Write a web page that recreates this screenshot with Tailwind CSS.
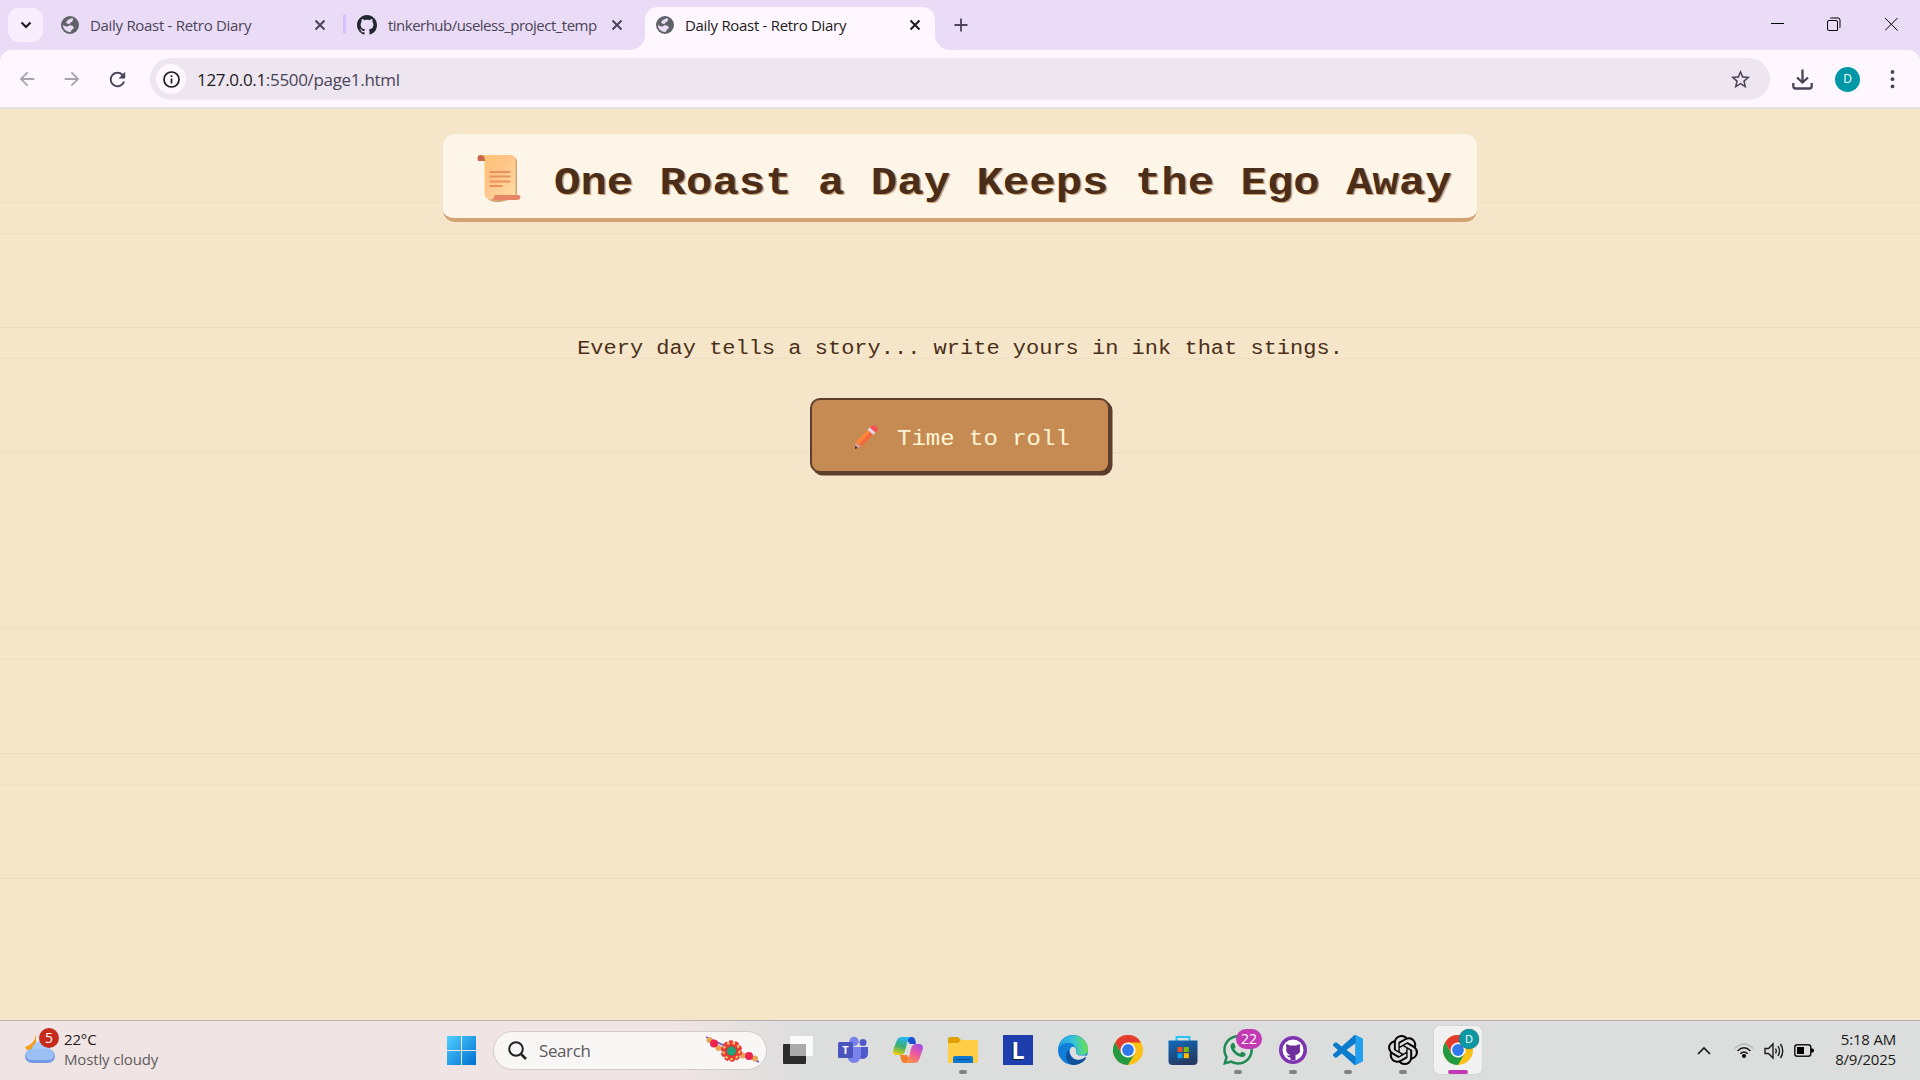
<!DOCTYPE html>
<html lang="en">
<head>
<meta charset="utf-8">
<title>Daily Roast - Retro Diary</title>
<script src="https://cdn.jsdelivr.net/npm/@tailwindcss/browser@4"></script>
</head>
<body class="w-[1920px] h-[1080px] overflow-hidden">
<svg class="hidden">
  <symbol id="globe" viewBox="0 0 18 18"><circle cx="9" cy="9" r="9" fill="#5f6368"/><path d="M11.500 2Q5.500 3.500 5 7L8.500 8.300Q8.500 6.300 11 5.800Q13 4 11.500 2ZM1.800 8.800Q4 11 7 10.300Q8 9 10.500 9.500Q13.500 10.500 12.500 12.500Q10.500 13 9.500 16.200Q2.500 16 1.800 8.800Z" fill="#eadcf5"/></symbol>
  <symbol id="x" viewBox="0 0 12 12"><path d="M1.500 1.500L10.500 10.500M10.500 1.500L1.500 10.500" stroke="currentColor" stroke-width="2" fill="none"/></symbol>
  <symbol id="gh" viewBox="0 0 16 16"><path fill="currentColor" d="M8 0C3.580 0 0 3.580 0 8c0 3.540 2.290 6.530 5.470 7.590.4.070.55-.17.55-.38 0-.19-.01-.82-.01-1.490-2.010.37-2.530-.49-2.690-.94-.09-.23-.48-.94-.82-1.130-.28-.15-.68-.52-.01-.53.63-.01 1.080.58 1.230.82.72 1.210 1.870.87 2.330.66.070-.52.28-.87.51-1.070-1.780-.2-3.640-.89-3.640-3.950 0-.87.31-1.590.82-2.150-.08-.2-.36-1.020.08-2.120 0 0 .67-.21 2.200.82.64-.18 1.320-.27 2-.27.68 0 1.360.09 2 .27 1.530-1.040 2.200-.82 2.200-.82.44 1.100.16 1.920.08 2.120.51.56.82 1.270.82 2.150 0 3.070-1.870 3.750-3.650 3.950.29.25.54.73.54 1.480 0 1.070-.01 1.930-.01 2.200 0 .21.15.46.55.38A8.013 8.013 0 0016 8c0-4.420-3.580-8-8-8z"/></symbol>
  <symbol id="chrome" viewBox="0 0 30 30"><circle cx="15" cy="15" r="15" fill="#fbc116"/><path d="M2 7.500A15 15 0 0 1 28 7.500L15 7.500L8.500 18.700Z" fill="#e33b2e"/><path d="M2 7.500L8.500 18.750L15 22.500L21.500 18.700L15 30A15 15 0 0 1 2 7.500Z" fill="#249a42"/><circle cx="15" cy="15" r="7.500" fill="#fff"/><circle cx="15" cy="15" r="5.900" fill="#3079ed"/></symbol>
</svg>
<div class="flex h-full flex-col bg-[#f5e6c9]">
  <!-- tab strip -->
  <div class="flex h-[50px] shrink-0 items-start bg-[#eadcf6] font-['Open_Sans',sans-serif] text-[#4a4458]">
    <div class="mt-2 ml-2 flex h-[34px] w-[35px] items-center justify-center rounded-[11px] bg-[#f8eefe]"><svg class="h-[8px] w-[12px]" viewBox="0 0 12 8"><path d="M1.500 1.500L6 6L10.500 1.500" fill="none" stroke="#1d1b20" stroke-width="2.200"/></svg></div>
    <div class="ml-[18px] flex h-[50px] w-[282px] items-center"><svg class="size-[18px]"><use href="#globe"/></svg><span class="ml-[11px] w-[224px] pt-px text-[15px] tracking-[-0.3px] whitespace-nowrap">Daily Roast - Retro Diary</span><svg class="size-3"><use href="#x"/></svg></div>
    <div class="mt-[14px] h-[20px] w-[3px] rounded bg-[#dcbfff]"></div>
    <div class="ml-[11px] flex h-[50px] w-[288px] items-center text-[#24292f]"><svg class="size-5"><use href="#gh"/></svg><span class="ml-[11px] w-[223px] pt-px text-[15px] tracking-[-0.52px] whitespace-nowrap text-[#4a4458]">tinkerhub/useless_project_temp</span><svg class="size-3 text-[#4a4458]"><use href="#x"/></svg></div>
    <div class="relative mt-[7px] flex h-[43px] w-[290px] items-center rounded-t-[13px] bg-[#fef7ff] pb-[7px] pl-[11px] text-[#1d1b20]">
      <svg class="absolute bottom-0 left-[-15px] size-[15px]" viewBox="0 0 15 15"><path d="M0 15A15 15 0 0 0 15 0V15Z" fill="#fef7ff"/></svg>
      <svg class="absolute right-[-15px] bottom-0 size-[15px]" viewBox="0 0 15 15"><path d="M15 15A15 15 0 0 1 0 0V15Z" fill="#fef7ff"/></svg>
      <svg class="size-[18px]"><use href="#globe"/></svg><span class="ml-[11px] w-[224px] pt-px text-[15px] tracking-[-0.3px] whitespace-nowrap">Daily Roast - Retro Diary</span><svg class="size-3"><use href="#x"/></svg>
    </div>
    <svg class="mt-[18px] ml-[19px] size-[14px]" viewBox="0 0 14 14"><path d="M7 .5V13.500M.5 7H13.500" stroke="#4a4458" stroke-width="1.800"/></svg>
    <div class="mt-[17px] mr-[21px] ml-auto flex text-black">
      <svg class="size-[14px]" viewBox="0 0 14 14"><path d="M0 6.500H13" stroke="currentColor"/></svg>
      <svg class="ml-[42px] size-[14px]" viewBox="0 0 14 14"><path d="M2 3.500H9Q10.500 3.500 10.500 5V13.500H2Q.5 13.500 .5 12V5Q.5 3.500 2 3.500Z" fill="none" stroke="currentColor"/><path d="M3 1.500Q3.300 1 4.500 1H11Q13 1 13 3V9.500Q13 11 12.300 11.200" fill="none" stroke="currentColor"/></svg>
      <svg class="ml-[44px] size-[14px]" viewBox="0 0 14 14"><path d="M0 1L12.500 13.500M12.500 1L0 13.500" stroke="currentColor"/></svg>
    </div>
  </div>
  <!-- toolbar -->
  <div class="h-[59px] shrink-0 bg-[#eadcf6]">
    <div class="flex h-[59px] items-center rounded-t-[12px] border-b-2 border-[#e7dfea] bg-[#fef7ff] pt-px pr-5 pl-4">
      <svg class="size-[22px] text-[#aaa3ae]" viewBox="0 0 24 24"><path fill="currentColor" d="M20 11H7.830l5.590-5.590L12 4l-8 8 8 8 1.410-1.410L7.830 13H20v-2z"/></svg>
      <svg class="ml-[23px] size-[22px] rotate-180 text-[#aaa3ae]" viewBox="0 0 24 24"><path fill="currentColor" d="M20 11H7.830l5.590-5.590L12 4l-8 8 8 8 1.410-1.410L7.830 13H20v-2z"/></svg>
      <svg class="ml-[23px] size-[23px] text-[#4a4458]" viewBox="0 0 24 24"><path fill="currentColor" d="M17.650 6.350C16.200 4.900 14.210 4 12 4c-4.420 0-7.990 3.580-7.990 8s3.570 8 7.990 8c3.730 0 6.840-2.550 7.730-6h-2.080c-.82 2.330-3.040 4-5.650 4-3.310 0-6-2.690-6-6s2.690-6 6-6c1.660 0 3.140.69 4.220 1.780L13 11h7V4l-2.350 2.350z"/></svg>
      <div class="ml-[21px] flex h-[42px] w-[1620px] items-center rounded-full bg-[#ede6f1] pr-[18px] pl-[6px]">
        <div class="flex size-[30px] items-center justify-center rounded-full bg-[#fef7ff]"><svg class="size-[17px]" viewBox="0 0 17 17"><circle cx="8.500" cy="8.500" r="7.500" fill="none" stroke="#1d1b20" stroke-width="1.700"/><path d="M8.500 7.500V12.500M8.500 4.300V6" stroke="#1d1b20" stroke-width="1.700"/></svg></div>
        <span class="ml-[11px] pt-px font-['Open_Sans',sans-serif] text-[17px] tracking-[-0.32px] whitespace-nowrap text-[#4a4458]"><span class="text-[#1d1b20]">127.0.0.1</span>:5500/page1.html</span>
        <svg class="ml-auto size-[23px] text-[#4a4458]" viewBox="0 0 24 24"><path fill="currentColor" d="M22 9.240l-7.190-.62L12 2 9.190 8.630 2 9.240l5.460 4.730L5.820 21 12 17.270 18.180 21l-1.630-7.030L22 9.240zM12 15.400l-3.760 2.270 1-4.280-3.320-2.880 4.380-.38L12 6.100l1.710 4.040 4.380.38-3.320 2.880 1 4.280L12 15.400z"/></svg>
      </div>
      <svg class="ml-[22px] size-[21px]" viewBox="0 0 21 21"><path d="M10.500 .5V13M5 8.500L10.500 13.500L16 8.500M1.300 14V17Q1.300 19.500 3.500 19.500H17.500Q19.700 19.500 19.700 17V14" fill="none" stroke="#4a4458" stroke-width="2.300"/></svg>
      <div class="ml-[22px] flex size-[25px] items-center justify-center rounded-full bg-[#0097a7] font-['Open_Sans',sans-serif] text-xs text-white">D</div>
      <svg class="ml-auto h-[19px] w-[15px]" viewBox="0 0 15 19"><g fill="#4a4458"><circle cx="7.500" cy="2" r="1.900"/><circle cx="7.500" cy="9.200" r="1.900"/><circle cx="7.500" cy="16.400" r="1.900"/></g></svg>
    </div>
  </div>
  <!-- diary page -->
  <main class="relative isolate flex h-[911px] flex-col items-center font-['Liberation_Mono','Courier_New',monospace] text-[#4b2e1a]">
    <!-- ruled paper lines -->
    <div class="absolute inset-0 -z-10 flex flex-col pt-[93px] *:grid *:h-[125px] *:shrink-0 *:grid-rows-4">
      <div><i class="border-t border-[#efddc0]"></i><i class="border-t border-[#f0dfc2]"></i><i class="border-t border-[#f3e3c7]"></i><i></i></div>
      <div><i class="border-t border-[#efddc0]"></i><i class="border-t border-[#f0dfc2]"></i><i class="border-t border-[#f3e3c7]"></i><i></i></div>
      <div><i class="border-t border-[#f1dabd]"></i><i class="border-t border-[#f1e0c3]"></i><i class="border-t border-[#f4e4c8]"></i><i></i></div>
      <div class="mt-[51px]"><i class="border-t border-[#efddc0]"></i><i class="border-t border-[#f0dfc2]"></i><i></i><i></i></div>
      <div><i class="border-t border-[#efddc0]"></i><i class="border-t border-[#f0dfc2]"></i><i></i><i></i></div>
      <div><i class="border-t border-[#efddc0]"></i><i class="border-t border-[#f3e3c7]"></i><i></i><i></i></div>
    </div>
    <h1 class="mt-[25px] flex h-[88px] w-[1034px] items-center rounded-[12px] border-b-4 border-[#d4a373] bg-[#fffaf0]/80 pl-[31px] text-[44px] font-bold whitespace-nowrap">
      <svg class="mt-[4px] h-[48px] w-[49px] shrink-0" viewBox="0 0 48 48"><defs><linearGradient id="sc" x2="1" y2="1"><stop stop-color="#ffc96d"/><stop offset=".4" stop-color="#ffc286"/><stop offset="1" stop-color="#ffdfa5"/></linearGradient></defs><path d="M5 2H36Q41 2 41 7V43L24 47Q11 48 11 40V8Z" fill="#d4a373" transform="translate(1.500 1)"/><path d="M5 1H37Q41 2 41 6V42L23 46Q10 47 10 40V6Z" fill="url(#sc)"/><path d="M3 4Q3 1 6.500 1Q10.500 1 10.500 7H4Q3 7 3 4Z" fill="#cc6548"/><path d="M20 41H44Q46 41 46 43Q46 46 42 46H15Q20 46 20 41Z" fill="#e78766"/><path d="M15 18H36M15 22.500H36M15 27.500H36M15 32H28" stroke="#e8935e" stroke-width="2"/></svg>
      <span class="ml-[31px] inline-block scale-y-[.88] pt-[15px] [text-shadow:1.500px_1.500px_#d4a373]">One Roast a Day Keeps the Ego Away</span>
    </h1>
    <p class="mt-[115px] scale-y-[.9] text-[22px] leading-[25px] whitespace-nowrap">Every day tells a story... write yours in ink that stings.</p>
    <button class="mt-[36px] flex h-[75px] w-[300px] items-center rounded-[10px] border-2 border-[#5d3d2b] bg-[#c68b52] pl-[41px] text-[24px] whitespace-nowrap text-[#fff5d6] shadow-[2.500px_2.500px_#5d3d2b]">
      <svg class="mt-[3px] h-[27px] w-[27px]" viewBox="0 0 28 28"><path d="M2 26L2.500 19L18 3L24 8L9 23Z" fill="#fb8638"/><path d="M5.500 22L20.500 5.500L24 8L9 23Z" fill="#ee6a3c"/><path d="M2 26L2.500 19L9 23Z" fill="#d99a8d"/><path d="M2 26L2.300 22.500L5 24.800Z" fill="#4a2540"/><path d="M15 6L17.500 3.500L23.500 8.700L21.200 11.300Z" fill="#dcd6e8"/><path d="M17.500 3.500Q20 1 22.500 1.800Q26.500 3.500 25.500 6.500L23.500 8.700Z" fill="#fb4d55"/></svg>
      <span class="ml-[17px] inline-block scale-y-[.92] pt-[8px]">Time to roll</span>
    </button>
  </main>
  <!-- taskbar -->
  <div class="flex h-[60px] shrink-0 items-center border-t border-[#b7b1b1] bg-linear-to-r from-[#f0e5e4] from-35% to-[#dcdddd] to-42% font-['Open_Sans',sans-serif] text-sm">
    <div class="relative ml-[24px] h-[38px] w-[40px] shrink-0"><svg class="size-full" viewBox="0 0 40 38"><path d="M12 2V18H3L1 15Q11 12 12 2Z" fill="#f3a11b"/><rect x="1" y="17" width="30" height="14" rx="7" fill="#7299e6"/><circle cx="17" cy="18" r="9" fill="#a8caf8"/><rect x="2" y="17" width="28" height="11" rx="5.500" fill="#9cc0f6"/></svg><div class="absolute top-[-4px] left-[15px] flex size-5 items-center justify-center rounded-full bg-[#c42b1c] text-sm text-white">5</div></div>
    <div class="w-[383px] pb-[3px] text-[15px] leading-5 tracking-[-0.15px] text-[#1b1b1b]"><div>22°C</div><div class="text-[#605c5c]">Mostly cloudy</div></div>
    <svg class="h-[29px] w-[29px] shrink-0" viewBox="0 0 29 29"><defs><linearGradient id="win" x2="1" y2="1"><stop stop-color="#4fd0ff"/><stop offset="1" stop-color="#006fd1"/></linearGradient></defs><path d="M0 0H14V14H0ZM15 0H29V14H15ZM0 15H14V29H0ZM15 15H29V29H15Z" fill="url(#win)"/></svg>
    <div class="ml-[17px] flex h-[39px] w-[274px] shrink-0 items-center rounded-full border border-[#d3cbcb] bg-[#f9f6f6] pl-[14px]">
      <svg class="size-[19px]" viewBox="0 0 19 19"><circle cx="8" cy="8" r="6.800" fill="none" stroke="#222" stroke-width="2"/><path d="M13 13L18 18" stroke="#222" stroke-width="2.500"/></svg>
      <span class="ml-[12px] w-[166px] pt-px text-[17px] tracking-[-0.4px] text-[#5d5a5a]">Search</span>
      <svg class="mb-[2px] h-[28px] w-[56px]" viewBox="0 0 56 28"><path d="M1 1L54 26" stroke="#6b4fc0" stroke-width="1.500"/><g fill="#e5a555"><circle cx="4.500" cy="4" r="3"/><circle cx="13.500" cy="12" r="3"/><circle cx="38" cy="19.500" r="3"/><circle cx="50" cy="22.500" r="3"/></g><circle cx="9" cy="7.500" r="4" fill="#ee2350"/><circle cx="44" cy="20" r="4" fill="#ee2350"/><circle cx="26.500" cy="15" r="9.500" fill="#e93a3a" stroke="#e93a3a" stroke-width="2.500" stroke-dasharray="4 2"/><circle cx="26.500" cy="15" r="8" fill="none" stroke="#ffd257" stroke-width="2" stroke-dasharray="2.500 3"/><circle cx="26.500" cy="15" r="5" fill="#1fa77a" stroke="#c43a2e"/></svg>
    </div>
    <div class="ml-[7px] flex shrink-0 gap-[7px] pb-px *:relative *:flex *:size-12 *:items-center *:justify-center">
      <div><svg class="size-[30px]" viewBox="0 0 30 30"><rect y="9" width="23" height="20" rx="1" fill="#2c2c2c"/><rect x="7" y="1" width="23" height="20" rx="1" fill="#fafafa"/><rect x="7" y="9" width="16" height="12" fill="#aaa"/></svg></div>
      <div><svg class="size-[30px]" viewBox="0 0 30 30"><circle cx="25" cy="7.500" r="3.500" fill="#5059c9"/><path d="M20 12H30V19Q29.500 24 24 24L20 23Z" fill="#5059c9"/><circle cx="16" cy="6.500" r="4.700" fill="#7b83eb"/><path d="M9 12H23V20Q22 28 16 28Q10 28 9 20Z" fill="#7b83eb"/><rect y="7" width="15" height="16" rx="1.500" fill="#4b53bc"/><text x="7.500" y="19" text-anchor="middle" font-size="11" font-weight="bold" fill="#fff">T</text></svg></div>
      <div><svg class="size-[30px]" viewBox="0 0 30 30"><defs><linearGradient id="ca" x1=".5" x2=".2" y2="1"><stop stop-color="#22b7f2"/><stop offset=".5" stop-color="#3aaf6f"/><stop offset="1" stop-color="#f7d000"/></linearGradient><linearGradient id="cb" x1=".8" x2=".2" y2="1"><stop stop-color="#a44ee8"/><stop offset=".5" stop-color="#ee5a9c"/><stop offset="1" stop-color="#ff9a3c"/></linearGradient></defs><path d="M11 2H19Q21.500 2 22.500 6L23 9H17Z" fill="#1b4fd0"/><path d="M19 28H11Q9 28 8 24L7 20H14Z" fill="#f2802e"/><path d="M9 2H18Q15 3 14 8L12 16Q11 20 7 20H3Q-1 20 .5 14L4 5Q5.500 2 9 2Z" fill="url(#ca)"/><path d="M21 28H12Q15 27 16 22L18 14Q19 9 23 9H27Q31 10 29.500 15L26 25Q24.500 28 21 28Z" fill="url(#cb)"/></svg></div>
      <div><svg class="size-[30px]" viewBox="0 0 30 30"><path d="M0 4Q0 2 2 2H10L13 5H28Q30 5 30 7V12H0Z" fill="#e0a008"/><path d="M0 8H10L13 5H30V28H0Z" fill="#ffce47"/><path d="M5 28V23Q5 21 7 21H23Q25 21 25 23V28Z" fill="#0f78d0"/><path d="M8 24.500H22" stroke="#0b4f94"/></svg><i class="absolute bottom-0 h-1 w-2 rounded bg-[#828282]"></i></div>
      <div><div class="flex size-[30px] items-center justify-center bg-[#1f3ead] text-[23px] font-bold text-white [text-shadow:-1px_1px_#123]">L</div></div>
      <div><svg class="size-[30px]" viewBox="0 0 30 30"><defs><linearGradient id="ea" y1=".5" y2=".4"><stop stop-color="#1f9ede"/><stop offset=".5" stop-color="#35c1e0"/><stop offset="1" stop-color="#6be645"/></linearGradient></defs><circle cx="15" cy="15" r="15" fill="#0f7fd8"/><path d="M1 10A15 15 0 0 1 30 14Q30 20 24 20Q18 20 18 18Q19.500 16 18 13Q15 7 8 8Q3 9 0 14Z" fill="url(#ea)"/><path d="M11.500 17Q12 11 16.500 12Q19 14 18 18Q19 21 25 20.500Q31 20 31 22L27 26Q14 27 11.500 17Z" fill="#dcdedf"/><path d="M11 15Q11 24 20 25Q24 25 27.500 22Q28.500 22 27 25Q22 30 15 30Q8 28 8 21Q8 17 11 15Z" fill="#0f509b"/></svg></div>
      <div><svg class="size-[30px]"><use href="#chrome"/></svg></div>
      <div><svg class="size-[30px]" viewBox="0 0 30 30"><defs><linearGradient id="st" y2="1" x2=".4"><stop stop-color="#0f6cbd"/><stop offset="1" stop-color="#243a63"/></linearGradient></defs><path d="M8.500 6V2H21.500V6" fill="none" stroke="#29c3f5" stroke-width="2"/><path d="M.5 5.500H29.500V26Q29.500 30 25.500 30H4.500Q.5 30 .5 26Z" fill="url(#st)"/><path d="M9.500 12H14.500V17H9.500Z" fill="#f25022"/><path d="M15.800 12H20.800V17H15.800Z" fill="#7fba00"/><path d="M9.500 18.200H14.500V23.200H9.500Z" fill="#00a4ef"/><path d="M15.800 18.200H20.800V23.200H15.800Z" fill="#ffb900"/></svg></div>
      <div><svg class="size-[30px] text-[#1f8b52]" viewBox="0 0 24 24"><path fill="currentColor" d="M17.472 14.382c-.297-.149-1.758-.867-2.030-.967-.273-.099-.471-.148-.67.15-.197.297-.767.966-.94 1.164-.173.199-.347.223-.644.075-.297-.15-1.255-.463-2.390-1.475-.883-.788-1.480-1.761-1.653-2.059-.173-.297-.018-.458.13-.606.134-.133.298-.347.446-.52.149-.174.198-.298.298-.497.099-.198.05-.371-.025-.52-.075-.149-.669-1.612-.916-2.207-.242-.579-.487-.5-.669-.51-.173-.008-.371-.01-.57-.01-.198 0-.52.074-.792.372-.272.297-1.040 1.016-1.040 2.479 0 1.462 1.065 2.875 1.213 3.074.149.198 2.096 3.200 5.077 4.487.709.306 1.262.489 1.694.625.712.227 1.360.195 1.871.118.571-.085 1.758-.719 2.006-1.413.248-.694.248-1.289.173-1.413-.074-.124-.272-.198-.57-.347m-5.421 7.403h-.004a9.870 9.870 0 01-5.031-1.378l-.361-.214-3.741.982.998-3.648-.235-.374a9.860 9.860 0 01-1.510-5.260c.001-5.450 4.436-9.884 9.888-9.884 2.640 0 5.122 1.030 6.988 2.898a9.825 9.825 0 012.893 6.994c-.003 5.450-4.437 9.884-9.885 9.884m8.413-18.297A11.815 11.815 0 0012.050 0C5.495 0 .16 5.335.157 11.892c0 2.096.547 4.142 1.588 5.945L.057 24l6.305-1.654a11.882 11.882 0 005.683 1.448h.005c6.554 0 11.890-5.335 11.893-11.893a11.821 11.821 0 00-3.480-8.413Z"/></svg><b class="absolute top-[3px] left-[22px] flex h-5 w-[26px] items-center justify-center rounded-full bg-[#c239b3] text-sm font-normal text-white">22</b><i class="absolute bottom-0 h-1 w-2 rounded bg-[#828282]"></i></div>
      <div><svg class="size-[28px]" viewBox="0 0 28 28"><circle cx="14" cy="14" r="12.500" fill="#6e2f9c" stroke="#7f35b2" stroke-width="3"/><circle cx="14" cy="14" r="10.500" fill="#fff"/><path d="M7.500 8L11 9.500H17L20.500 8Q21.500 10 20.800 12Q22 16 19 18Q17.500 19 16.500 19V24H11.500V21.500Q9 22 7.500 19Q9 20 11.500 19Q8 18 7.200 15Q7 13 7.500 12Q6.500 10 7.500 8Z" fill="#6e2f9c"/></svg><i class="absolute bottom-0 h-1 w-2 rounded bg-[#828282]"></i></div>
      <div><svg class="size-[30px]" viewBox="0 0 24 24"><path fill="#0a7ccb" fill-rule="evenodd" d="M23.150 2.587L18.210.21a1.494 1.494 0 0 0-1.705.29l-9.460 8.630-4.120-3.128a.999.999 0 0 0-1.276.057L.327 7.261A1 1 0 0 0 .326 8.740L3.899 12 .326 15.260a1 1 0 0 0 .001 1.479L1.650 17.940a.999.999 0 0 0 1.276.057l4.120-3.128 9.460 8.630a1.492 1.492 0 0 0 1.704.29l4.942-2.377A1.500 1.500 0 0 0 24 20.060V3.939a1.500 1.500 0 0 0-.85-1.352zm-5.146 14.861L10.826 12l7.178-5.448v10.896z"/><path d="M18 .2L23.150 2.587Q24 3 24 4V20Q24 21 23.150 21.400L18 23.800Z" fill="#23a0f0"/></svg><i class="absolute bottom-0 h-1 w-2 rounded bg-[#828282]"></i></div>
      <div><svg class="size-[30px]" viewBox="0 0 24 24"><path d="M22.282 9.821a5.985 5.985 0 0 0-.516-4.911 6.046 6.046 0 0 0-6.510-2.900A6.065 6.065 0 0 0 4.981 4.182a5.985 5.985 0 0 0-3.998 2.900 6.046 6.046 0 0 0 .743 7.097 5.980 5.980 0 0 0 .511 4.911 6.051 6.051 0 0 0 6.515 2.900A5.985 5.985 0 0 0 13.260 24a6.056 6.056 0 0 0 5.772-4.206 5.989 5.989 0 0 0 3.998-2.900 6.056 6.056 0 0 0-.748-7.073zm-9.022 12.608a4.476 4.476 0 0 1-2.876-1.041l.142-.080 4.778-2.758a.795.795 0 0 0 .393-.681v-6.737l2.020 1.169a.071.071 0 0 1 .038.052v5.583a4.504 4.504 0 0 1-4.495 4.494zm-9.661-4.125a4.471 4.471 0 0 1-.535-3.014l.142.085 4.783 2.758a.771.771 0 0 0 .781 0l5.843-3.369v2.332a.080.080 0 0 1-.033.062L9.740 19.950a4.499 4.499 0 0 1-6.141-1.646zM2.341 7.896a4.485 4.485 0 0 1 2.366-1.973V11.600a.766.766 0 0 0 .388.677l5.814 3.354-2.020 1.169a.076.076 0 0 1-.071 0l-4.830-2.787A4.504 4.504 0 0 1 2.341 7.872zm16.596 3.856L13.104 8.364 15.119 7.200a.076.076 0 0 1 .071 0l4.830 2.791a4.494 4.494 0 0 1-.677 8.104v-5.677a.790.790 0 0 0-.407-.667zm2.011-3.023l-.142-.085-4.774-2.782a.776.776 0 0 0-.785 0L9.409 9.230V6.897a.066.066 0 0 1 .028-.062l4.830-2.787a4.499 4.499 0 0 1 6.680 4.660zM8.307 12.863l-2.020-1.164a.080.080 0 0 1-.038-.057V6.074a4.499 4.499 0 0 1 7.376-3.454l-.142.081L8.704 5.459a.795.795 0 0 0-.393.681zm1.098-2.365l2.602-1.500 2.607 1.500v2.999l-2.597 1.500-2.607-1.500Z"/></svg><i class="absolute bottom-0 h-1 w-2 rounded bg-[#828282]"></i></div>
      <div class="rounded-[5px] bg-[#f1f1f1] shadow-[0_0_1px_#999]"><svg class="size-[30px]"><use href="#chrome"/></svg><b class="absolute top-[3px] left-[25px] flex size-5 items-center justify-center rounded-full bg-[#0c97a2] text-[11px] font-normal text-white shadow-[0_0_1px_#333]">D</b><i class="absolute bottom-0 h-1 w-5 rounded bg-[#c239b3]"></i></div>
    </div>
    <div class="mr-[24px] ml-auto flex items-center text-[#1b1b1b]">
      <svg class="h-[9px] w-[14px]" viewBox="0 0 14 9"><path d="M1 8L7 2L13 8" fill="none" stroke="#1b1b1b" stroke-width="1.700"/></svg>
      <svg class="ml-[23px] h-[15px] w-[20px]" viewBox="0 0 20 15"><g fill="none" stroke="#1b1b1b" stroke-width="1.500"><path d="M.7 5.500Q10-3.500 19.300 5.500" stroke="#b7b7b7"/><path d="M3.500 8Q10 1.500 16.500 8M6.300 10.800Q10 7 13.700 10.800"/></g><circle cx="10" cy="13" r="2"/></svg>
      <svg class="ml-[10px] h-[18px] w-[20px]" viewBox="0 0 20 18"><g fill="none" stroke="#1b1b1b" stroke-width="1.400"><path d="M1 6.500H4.500L9 2V16L4.500 11.500H1ZM11.500 6.500Q13 9 11.500 11.500M14 4Q17 9 14 14M16.500 2Q21 9 16.500 16"/></g></svg>
      <svg class="ml-[10px] h-[13px] w-[20px]" viewBox="0 0 20 13"><rect x=".8" y=".8" width="16" height="11.400" rx="2.500" fill="none" stroke="#1b1b1b" stroke-width="1.500"/><rect x="3" y="3" width="7" height="7"/><path d="M17 4.500H18.500Q20 4.500 20 6.500T18.500 8.500H17Z"/></svg>
      <div class="ml-[21px] w-[61px] pb-[3px] text-right text-[15px] leading-5 tracking-[-0.2px] whitespace-nowrap"><div>5:18 AM</div><div>8/9/2025</div></div>
    </div>
  </div>
</div>
</body>
</html>
